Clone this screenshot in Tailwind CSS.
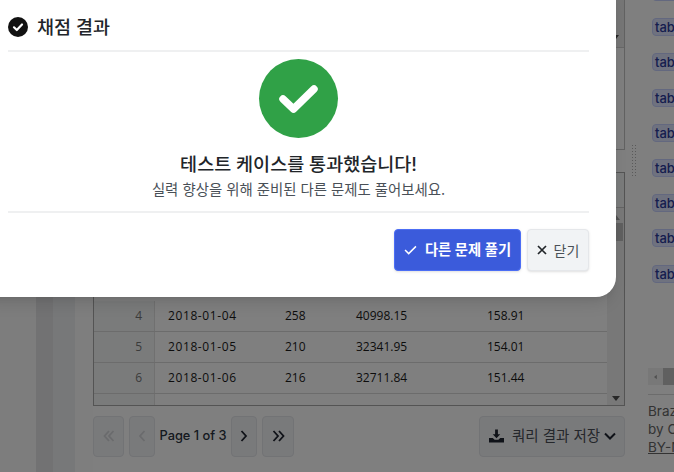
<!DOCTYPE html>
<html lang="ko">
<head>
<meta charset="utf-8">
<script src="https://cdn.jsdelivr.net/npm/@tailwindcss/browser@4"></script>
</head>
<body class="font-['Inter','Noto_Sans_CJK_KR',sans-serif]">
<div class="relative w-[674px] h-[472px] overflow-hidden bg-white flex">
  <!-- page behind -->
  <div class="w-[36px] shrink-0 bg-[#fafafa]"></div>
  <div class="w-[17px] shrink-0 bg-[#e4e5e6]"></div>
  <div class="w-[22px] shrink-0 bg-[#eef0f3]"></div>
  <div class="w-[18px] shrink-0 bg-[#fcfcfc]"></div>
  <main class="w-[532px] shrink-0 flex flex-col">
    <div class="h-[150px] shrink-0 border border-t-0 border-[#c4c4c4] flex flex-col">
      <div class="h-[48px] border-b border-[#d0d0d0] bg-[#ececec] flex justify-end items-end pb-[8px] pr-[5px]">
        <svg width="6" height="4" viewBox="0 0 6 4"><path d="M0 0h6L3 4z" fill="#505050"/></svg>
      </div>
    </div>
    <div class="h-[22px] shrink-0"></div>
    <div class="h-[234px] shrink-0 border border-[#a8a8a8] flex bg-white">
      <div class="flex-1 flex flex-col justify-end">
        <div class="h-[35px] shrink-0 bg-[#f4f6f6] border-b border-[#c8c8c8]"></div>
        <div class="flex-1"></div>
        <div class="flex flex-col font-['Open_Sans','DejaVu_Sans',sans-serif] text-[12px] text-[#1a1a1a]">
          <div class="flex h-[31px] items-center border-b border-[#d9d9d9]">
            <div class="w-[61px] h-full shrink-0 flex items-center justify-end pr-[12px] bg-[#f4f6f6] border-r border-[#e0e0e0] text-[#777]">4</div>
            <div class="w-[130px] pl-[13px] tracking-[0.6px]">2018-01-04</div><div class="w-[71px]">258</div><div class="w-[131px]">40998.15</div><div class="w-[73px]">158.91</div>
          </div>
          <div class="flex h-[31px] items-center border-b border-[#d9d9d9]">
            <div class="w-[61px] h-full shrink-0 flex items-center justify-end pr-[12px] bg-[#f4f6f6] border-r border-[#e0e0e0] text-[#777]">5</div>
            <div class="w-[130px] pl-[13px] tracking-[0.6px]">2018-01-05</div><div class="w-[71px]">210</div><div class="w-[131px]">32341.95</div><div class="w-[73px]">154.01</div>
          </div>
          <div class="flex h-[31px] items-center border-b border-[#d9d9d9]">
            <div class="w-[61px] h-full shrink-0 flex items-center justify-end pr-[12px] bg-[#f4f6f6] border-r border-[#e0e0e0] text-[#777]">6</div>
            <div class="w-[130px] pl-[13px] tracking-[0.6px]">2018-01-06</div><div class="w-[71px]">216</div><div class="w-[131px]">32711.84</div><div class="w-[73px]">151.44</div>
          </div>
          <div class="h-[11px]"><div class="w-[61px] h-full bg-[#f4f6f6] border-r border-[#e0e0e0]"></div></div>
        </div>
      </div>
      <div class="w-[17px] shrink-0 bg-[#f1f1f1] flex flex-col items-center pb-1">
        <div class="h-[35px] w-full shrink-0 bg-[#f4f6f6] border-b border-[#c8c8c8]"></div>
        <svg class="mt-[7px] shrink-0" width="8" height="5" viewBox="0 0 8 5"><path d="M0 5h8L4 0z" fill="#a0a0a0"/></svg>
        <div class="mt-[3px] w-[15px] h-[18px] bg-[#c1c1c1]"></div>
        <svg class="mt-auto" width="8" height="5" viewBox="0 0 8 5"><path d="M0 0h8L4 5z" fill="#505050"/></svg>
      </div>
    </div>
    <div class="flex items-center justify-between pt-[10px] h-[50px] text-[12.800px] text-[#2b3340]">
      <div class="flex items-center">
        <div class="w-[31px] h-[41px] rounded border border-[#e4e6ea] bg-[#f3f4f6] flex items-center justify-center mr-[5px]">
          <svg width="12" height="12" viewBox="0 0 12 12" fill="none" stroke="#d4d6da" stroke-width="1.8"><path d="M6 1 1.500 6 6 11M10.500 1 6 6l4.500 5"/></svg>
        </div>
        <div class="w-[26px] h-[41px] rounded border border-[#e4e6ea] bg-[#f3f4f6] flex items-center justify-center">
          <svg width="8" height="12" viewBox="0 0 8 12" fill="none" stroke="#d4d6da" stroke-width="1.8"><path d="M6.500 1 2 6l4.500 5"/></svg>
        </div>
        <span class="font-medium w-[76px] text-center whitespace-nowrap">Page 1 of 3</span>
        <div class="w-[26px] h-[41px] rounded border border-[#e4e6ea] bg-[#f3f4f6] flex items-center justify-center mr-[5px]">
          <svg width="8" height="12" viewBox="0 0 8 12" fill="none" stroke="#1f2430" stroke-width="1.800"><path d="M1.500 1 6 6l-4.500 5"/></svg>
        </div>
        <div class="w-[32px] h-[41px] rounded border border-[#e4e6ea] bg-[#f3f4f6] flex items-center justify-center">
          <svg width="13" height="12" viewBox="0 0 13 12" fill="none" stroke="#1f2430" stroke-width="1.800"><path d="M1.500 1 6 6l-4.500 5M7 1l4.500 5L7 11"/></svg>
        </div>
      </div>
      <div class="w-[146px] h-[41px] rounded border border-[#e4e6ea] bg-[#f3f4f6] flex items-center pl-[9px] text-[14.500px] text-[#4a4f57]">
        <svg class="mr-[8px] shrink-0" width="15" height="14" viewBox="0 0 16 14" fill="#1f2430"><path d="M6.500 0h3v5h2.500L8 9.500 4 5h2.500zM0 9h4l2 2h4l2-2h4v5H0z"/></svg>
        <span class="whitespace-nowrap">쿼리 결과 저장</span>
        <svg class="ml-[4px] shrink-0" width="12" height="8" viewBox="0 0 12 8" fill="none" stroke="#1f2430" stroke-width="2"><path d="M1 1.500 6 6.500l5-5"/></svg>
      </div>
    </div>
  </main>
  <aside class="flex-1 relative pl-[23px] flex flex-col min-w-0 overflow-hidden">
    <div class="absolute left-[6px] top-[144px] w-[6px] h-[33px] bg-[radial-gradient(#b5b5b5_1px,transparent_1px)] bg-[length:3px_3px]"></div>
    <div class="flex flex-col gap-[17.200px] pl-[4px] h-[368px] overflow-hidden">
      <span class="-mt-[17px] w-[40px] h-[18px] shrink-0 rounded border border-[#c6d0ff] bg-[#dfe5ff] text-[13px] leading-[16px] font-medium text-[#2b3a9c] pl-[2px]">table</span>
      <span class="w-[40px] h-[18px] shrink-0 rounded border border-[#c6d0ff] bg-[#dfe5ff] text-[13px] leading-[16px] font-medium text-[#2b3a9c] pl-[2px]">table</span>
      <span class="w-[40px] h-[18px] shrink-0 rounded border border-[#c6d0ff] bg-[#dfe5ff] text-[13px] leading-[16px] font-medium text-[#2b3a9c] pl-[2px]">table</span>
      <span class="w-[40px] h-[18px] shrink-0 rounded border border-[#c6d0ff] bg-[#dfe5ff] text-[13px] leading-[16px] font-medium text-[#2b3a9c] pl-[2px]">table</span>
      <span class="w-[40px] h-[18px] shrink-0 rounded border border-[#c6d0ff] bg-[#dfe5ff] text-[13px] leading-[16px] font-medium text-[#2b3a9c] pl-[2px]">table</span>
      <span class="w-[40px] h-[18px] shrink-0 rounded border border-[#c6d0ff] bg-[#dfe5ff] text-[13px] leading-[16px] font-medium text-[#2b3a9c] pl-[2px]">table</span>
      <span class="w-[40px] h-[18px] shrink-0 rounded border border-[#c6d0ff] bg-[#dfe5ff] text-[13px] leading-[16px] font-medium text-[#2b3a9c] pl-[2px]">table</span>
      <span class="w-[40px] h-[18px] shrink-0 rounded border border-[#c6d0ff] bg-[#dfe5ff] text-[13px] leading-[16px] font-medium text-[#2b3a9c] pl-[2px]">table</span>
      <span class="w-[40px] h-[18px] shrink-0 rounded border border-[#c6d0ff] bg-[#dfe5ff] text-[13px] leading-[16px] font-medium text-[#2b3a9c] pl-[2px]">table</span>
    </div>
    <div class="h-[17px] shrink-0 bg-[#f1f1f1] flex items-center"><svg class="ml-[6px]" width="5" height="8" viewBox="0 0 5 8"><path d="M5 0v8L0 4z" fill="#a0a0a0"/></svg><div class="ml-[6px] w-[20px] h-full bg-[#c1c1c1]"></div></div>
    <div class="mt-[9px] border-t border-[#d9d9d9] pt-[7px] text-[13.500px] leading-[18px] text-[#666] whitespace-nowrap">
      <div>Brazilian</div><div>by Olist</div><div class="underline">BY-NC-SA</div>
    </div>
  </aside>

  <!-- dim layer -->
  <div class="absolute inset-0 bg-black/50"></div>

  <!-- modal -->
  <div class="absolute left-[-32px] top-[-20px] w-[648px] h-[317px] bg-white rounded-[20px] shadow-lg pl-[40px] pr-[27px] flex flex-col">
    <div class="h-[72px] shrink-0 border-b-2 border-[#eff0f1] flex items-end pb-[11px] gap-[9px]">
      <svg width="20" height="20" viewBox="0 0 20 20" class="mb-[2px]"><circle cx="10" cy="10" r="10" fill="#111"/><path d="m6 10.300 2.800 2.700L14 7.500" fill="none" stroke="#fff" stroke-width="2.200" stroke-linecap="round" stroke-linejoin="round"/></svg>
      <h2 class="text-[18.500px] leading-[24px] font-medium text-[#212529]">채점 결과</h2>
    </div>
    <div class="h-[161px] shrink-0 border-b-2 border-[#eff0f1] flex flex-col items-center pt-[7px]">
      <div class="w-[79px] h-[79px] rounded-full bg-[#30a147] flex items-center justify-center">
        <svg width="40" height="30" viewBox="0 0 40 30" fill="none" stroke="#fff" stroke-width="7.500" stroke-linecap="round" stroke-linejoin="round"><path d="m4 15 10.500 10L35 5"/></svg>
      </div>
      <p class="mt-[13px] text-[18.500px] leading-[26px] font-medium text-[#212529]">테스트 케이스를 통과했습니다!</p>
      <p class="mt-[3px] text-[14.400px] leading-[20px] text-[#495057]">실력 향상을 위해 준비된 다른 문제도 풀어보세요.</p>
    </div>
    <div class="flex justify-end gap-[6px] pt-[16px]">
      <button class="w-[127px] h-[42px] rounded bg-[#3b5bdb] border border-[#4c6ef5] shadow-sm text-white text-[14.300px] font-semibold flex items-center justify-center gap-[8px]">
        <svg width="13" height="10" viewBox="0 0 14 11" fill="none" stroke="#fff" stroke-width="1.600"><path d="m1 5.500 4 4L13 1.500"/></svg>다른 문제 풀기
      </button>
      <button class="w-[62px] h-[42px] rounded bg-[#f1f3f5] border border-[#e5e7ea] shadow-sm text-[#495057] text-[14px] flex items-center justify-center gap-[7px]">
        <svg width="10" height="10" viewBox="0 0 10 10" fill="none" stroke="#212529" stroke-width="1.700"><path d="m1 1 8 8M9 1 1 9"/></svg>닫기
      </button>
    </div>
  </div>
</div>
</body>
</html>
